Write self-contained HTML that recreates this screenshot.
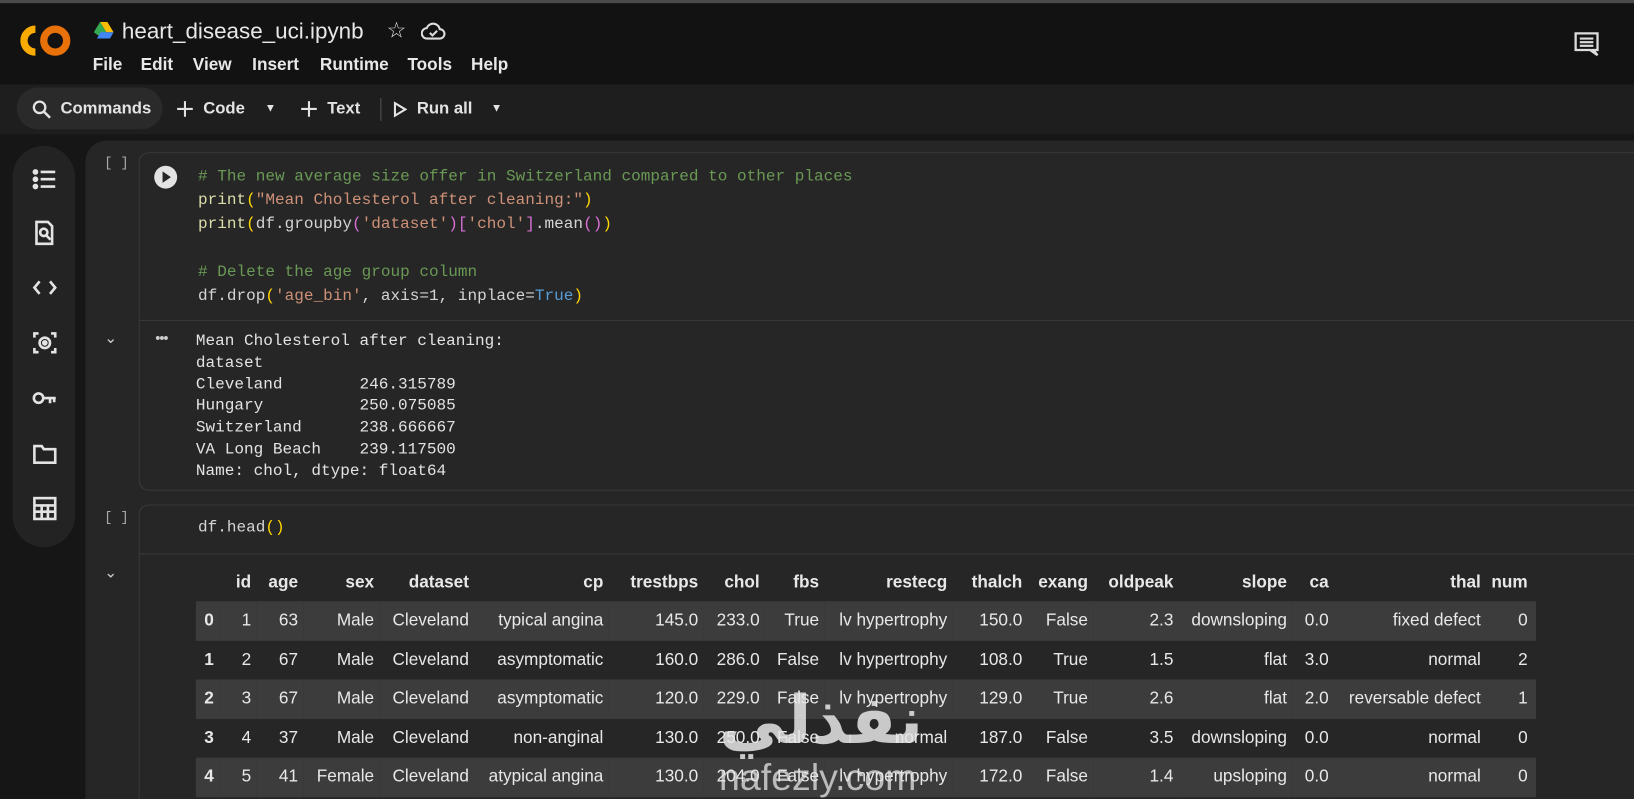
<!DOCTYPE html>
<html><head><meta charset="utf-8"><style>
html,body{margin:0;padding:0;background:#262626;overflow:hidden;width:1634px;height:799px;max-height:799px}
#w{position:absolute;left:0;top:0;width:1568px;height:767px;overflow:hidden;transform:scale(1.04209);transform-origin:0 0;background:#121212;font-family:"Liberation Sans",sans-serif;color:#e3e3e3}
.a{position:absolute;white-space:pre}
.m{font-family:"Liberation Mono",monospace}
.c{color:#6a9955}.s{color:#ce9178}.f{color:#dcdcaa}.y{color:#ffd700}.p{color:#da70d6}.b{color:#569cd6}.t{color:#d4d4d4}
table{border-collapse:collapse;font-size:16.5px;color:#e8e8e8}
td,th{padding:0 5px 0 0;text-align:right;height:37.5px;white-space:nowrap}
th{height:36px}
tr.z td{background:#3c3c3c}
.mn{font-size:16.5px;top:53px;font-weight:bold;color:#e8e8e8}
.tb{font-size:16px;top:96px;font-weight:bold}
</style></head><body><div id="w">
<div style="position:absolute;left:0;top:0;width:1568px;height:3px;background:#4a4a4a"></div>
<svg class="a" style="left:18px;top:22px" width="52" height="34" viewBox="0 0 52 34"><path d="M16 6 A11 11 0 1 0 16 28" fill="none" stroke="#f9ab00" stroke-width="7"/><circle cx="35" cy="17" r="11" fill="none" stroke="#e8710a" stroke-width="7"/></svg>
<svg class="a" style="left:90px;top:21px" width="19" height="16" viewBox="0 0 19 16"><path d="M6 0h7l6 10h-7z" fill="#fbbc04"/><path d="M6 0l6 10-3.5 6L0 10z" fill="#34a853"/><path d="M3 16l3.5-6H19l-3.5 6z" fill="#4285f4"/></svg>
<div class="a" style="left:117px;top:18px;font-size:21.5px;color:#e8e8e8">heart_disease_uci.ipynb</div>
<div class="a" style="left:371px;top:17px;font-size:21px;color:#ddd">☆</div>
<svg class="a" style="left:404px;top:21px" width="24" height="18" viewBox="0 0 24 18"><path d="M6 16h12a4.5 4.5 0 0 0 0-9 6.5 6.5 0 0 0-12.5-1A5 5 0 0 0 6 16z" fill="none" stroke="#ddd" stroke-width="2"/><path d="M8.5 10.5l2.5 2.5 4.5-4.5" fill="none" stroke="#ddd" stroke-width="2"/></svg>
<div class="a mn" style="left:89px">File</div>
<div class="a mn" style="left:135px">Edit</div>
<div class="a mn" style="left:185px">View</div>
<div class="a mn" style="left:242px">Insert</div>
<div class="a mn" style="left:307px">Runtime</div>
<div class="a mn" style="left:391px">Tools</div>
<div class="a mn" style="left:452px">Help</div>
<svg class="a" style="left:1510px;top:30px" width="26" height="26" viewBox="0 0 26 26"><path d="M2 2h21v16H19l4 5-7-5H2z" fill="none" stroke="#ddd" stroke-width="2.2"/><path d="M6 7h13M6 10.5h13M6 14h13" stroke="#ddd" stroke-width="2"/></svg>
<div style="position:absolute;left:0;top:81px;width:1568px;height:48px;background:#1e1e1f"></div>
<div style="position:absolute;left:16px;top:84px;width:140px;height:40px;border-radius:20px;background:#2a2a2b"></div>
<svg class="a" style="left:30px;top:95px" width="20" height="20" viewBox="0 0 20 20"><circle cx="8" cy="8" r="5.5" fill="none" stroke="#e3e3e3" stroke-width="2.2"/><path d="M12 12l6 6" stroke="#e3e3e3" stroke-width="2.4"/></svg>
<div class="a tb" style="left:58px">Commands</div>
<svg class="a" style="left:169px;top:96px" width="17" height="17" viewBox="0 0 17 17"><path d="M8.5 1v15M1 8.5h15" stroke="#e3e3e3" stroke-width="2"/></svg>
<div class="a tb" style="left:195px">Code</div>
<div class="a" style="left:254px;top:98px;font-size:11px">▼</div>
<svg class="a" style="left:288px;top:96px" width="17" height="17" viewBox="0 0 17 17"><path d="M8.5 1v15M1 8.5h15" stroke="#e3e3e3" stroke-width="2"/></svg>
<div class="a tb" style="left:314px">Text</div>
<div style="position:absolute;left:365px;top:94px;width:1px;height:22px;background:#555"></div>
<svg class="a" style="left:377px;top:97px" width="14" height="16" viewBox="0 0 14 16"><path d="M2 2l10 6-10 6z" fill="none" stroke="#e3e3e3" stroke-width="2"/></svg>
<div class="a tb" style="left:400px">Run all</div>
<div class="a" style="left:471px;top:98px;font-size:11px">▼</div>
<div style="position:absolute;left:0;top:129px;width:1568px;height:680px;background:#161616"></div>
<div style="position:absolute;left:12px;top:140px;width:60px;height:385px;border-radius:30px;background:#232323"></div>
<svg class="a" style="left:30px;top:160px" width="26" height="360" viewBox="0 0 26 360" fill="none" stroke="#e3e3e3" stroke-width="2.5">
<circle cx="4" cy="5" r="1.5" fill="#e3e3e3"/><circle cx="4" cy="12" r="1.5" fill="#e3e3e3"/><circle cx="4" cy="19" r="1.5" fill="#e3e3e3"/><path d="M9 5h14M9 12h14M9 19h14"/>
<path d="M5 53h11l4 4v17H5z"/><circle cx="12" cy="63" r="3.5"/><path d="M14.5 66l4 4"/>
<path d="M8 110l-5 6 5 6M18 110l5 6-5 6"/>
<path d="M3 164v-4h4M19 160h4v4M3 174v4h4M19 178h4v-4"/><circle cx="13" cy="169" r="5"/><circle cx="13" cy="169" r="1.5" fill="#e3e3e3"/>
<circle cx="7" cy="222" r="4.5"/><path d="M11.5 222h12M18 222v5M22 222v4"/>
<path d="M3 268h7l2 3h11v13H3z"/>
<rect x="3" y="318" width="20" height="20"/><path d="M3 325h20M3 331h20M10 325v13M16 325v13"/>
</svg>
<div style="position:absolute;left:82px;top:135px;width:1486px;height:680px;background:#262626;border-top-left-radius:20px"></div>
<div class="a m" style="left:100px;top:149px;font-size:13px;color:#aaa">[ ]</div>
<div style="position:absolute;left:133px;top:146px;width:1435px;height:323px;border:1px solid #3a3a3a;border-right:none;border-radius:10px 0 0 10px"></div>
<div style="position:absolute;left:134px;top:307px;width:1434px;height:1px;background:#3a3a3a"></div>
<svg class="a" style="left:147px;top:158px" width="24" height="24" viewBox="0 0 24 24"><circle cx="12" cy="12" r="11" fill="#e3e3e3"/><path d="M9 6.5l8 5.5-8 5.5z" fill="#262626"/></svg>
<div class="a m" style="left:190px;top:158px;font-size:15.4px;line-height:23px;color:#d4d4d4"><span class="c"># The new average size offer in Switzerland compared to other places</span>
<span class="f">print</span><span class="y">(</span><span class="s">"Mean Cholesterol after cleaning:"</span><span class="y">)</span>
<span class="f">print</span><span class="y">(</span>df.groupby<span class="p">(</span><span class="s">'dataset'</span><span class="p">)[</span><span class="s">'chol'</span><span class="p">]</span>.mean<span class="p">()</span><span class="y">)</span>

<span class="c"># Delete the age group column</span>
df.drop<span class="y">(</span><span class="s">'age_bin'</span>, axis=1, inplace=<span class="b">True</span><span class="y">)</span></div>
<div class="a" style="left:100px;top:315px;font-size:15px;color:#ccc">⌄</div>
<div class="a" style="left:149px;top:316px;font-size:14px;color:#ccc;letter-spacing:-1px">•••</div>
<div class="a m" style="left:188px;top:317px;font-size:15.4px;line-height:20.8px;color:#e3e3e3">Mean Cholesterol after cleaning:
dataset
Cleveland        246.315789
Hungary          250.075085
Switzerland      238.666667
VA Long Beach    239.117500
Name: chol, dtype: float64</div>
<div class="a m" style="left:100px;top:489px;font-size:13px;color:#aaa">[ ]</div>
<div style="position:absolute;left:133px;top:484px;width:1435px;height:340px;border:1px solid #3a3a3a;border-right:none;border-radius:10px 0 0 0"></div>
<div style="position:absolute;left:134px;top:531px;width:1434px;height:1px;background:#3a3a3a"></div>
<div class="a m" style="left:190px;top:497px;font-size:15.4px;color:#d4d4d4">df.head<span class="y">()</span></div>
<div class="a" style="left:100px;top:540px;font-size:15px;color:#ccc">⌄</div>
<table class="a" style="left:188px;top:541px;width:1286px;table-layout:fixed">
<colgroup><col style="width:24px"><col style="width:34px"><col style="width:45px"><col style="width:73px"><col style="width:91px"><col style="width:129px"><col style="width:91px"><col style="width:59px"><col style="width:57px"><col style="width:123px"><col style="width:72px"><col style="width:63px"><col style="width:82px"><col style="width:109px"><col style="width:40px"><col style="width:146px"><col style="width:48px"></colgroup>
<tr><th></th><th>id</th><th>age</th><th>sex</th><th>dataset</th><th>cp</th><th>trestbps</th><th>chol</th><th>fbs</th><th>restecg</th><th>thalch</th><th>exang</th><th>oldpeak</th><th>slope</th><th>ca</th><th>thal</th><th style="padding-right:8px">num</th></tr>
<tr class="z"><td style="text-align:left;padding-left:8px;font-weight:bold">0</td><td>1</td><td>63</td><td>Male</td><td>Cleveland</td><td>typical angina</td><td>145.0</td><td>233.0</td><td>True</td><td>lv hypertrophy</td><td>150.0</td><td>False</td><td>2.3</td><td>downsloping</td><td>0.0</td><td>fixed defect</td><td style="padding-right:8px">0</td></tr>
<tr><td style="text-align:left;padding-left:8px;font-weight:bold">1</td><td>2</td><td>67</td><td>Male</td><td>Cleveland</td><td>asymptomatic</td><td>160.0</td><td>286.0</td><td>False</td><td>lv hypertrophy</td><td>108.0</td><td>True</td><td>1.5</td><td>flat</td><td>3.0</td><td>normal</td><td style="padding-right:8px">2</td></tr>
<tr class="z"><td style="text-align:left;padding-left:8px;font-weight:bold">2</td><td>3</td><td>67</td><td>Male</td><td>Cleveland</td><td>asymptomatic</td><td>120.0</td><td>229.0</td><td>False</td><td>lv hypertrophy</td><td>129.0</td><td>True</td><td>2.6</td><td>flat</td><td>2.0</td><td>reversable defect</td><td style="padding-right:8px">1</td></tr>
<tr><td style="text-align:left;padding-left:8px;font-weight:bold">3</td><td>4</td><td>37</td><td>Male</td><td>Cleveland</td><td>non-anginal</td><td>130.0</td><td>250.0</td><td>False</td><td>normal</td><td>187.0</td><td>False</td><td>3.5</td><td>downsloping</td><td>0.0</td><td>normal</td><td style="padding-right:8px">0</td></tr>
<tr class="z"><td style="text-align:left;padding-left:8px;font-weight:bold">4</td><td>5</td><td>41</td><td>Female</td><td>Cleveland</td><td>atypical angina</td><td>130.0</td><td>204.0</td><td>False</td><td>lv hypertrophy</td><td>172.0</td><td>False</td><td>1.4</td><td>upsloping</td><td>0.0</td><td>normal</td><td style="padding-right:8px">0</td></tr>
</table>
<div class="a" style="left:690px;top:655px;font-size:64px;font-weight:bold;color:rgba(230,230,230,0.85);font-family:'DejaVu Sans',sans-serif">نفذلي</div>
<div class="a" style="left:690px;top:725px;font-size:36px;color:rgba(230,230,230,0.75)">nafezly.com</div>
</div></body></html>
